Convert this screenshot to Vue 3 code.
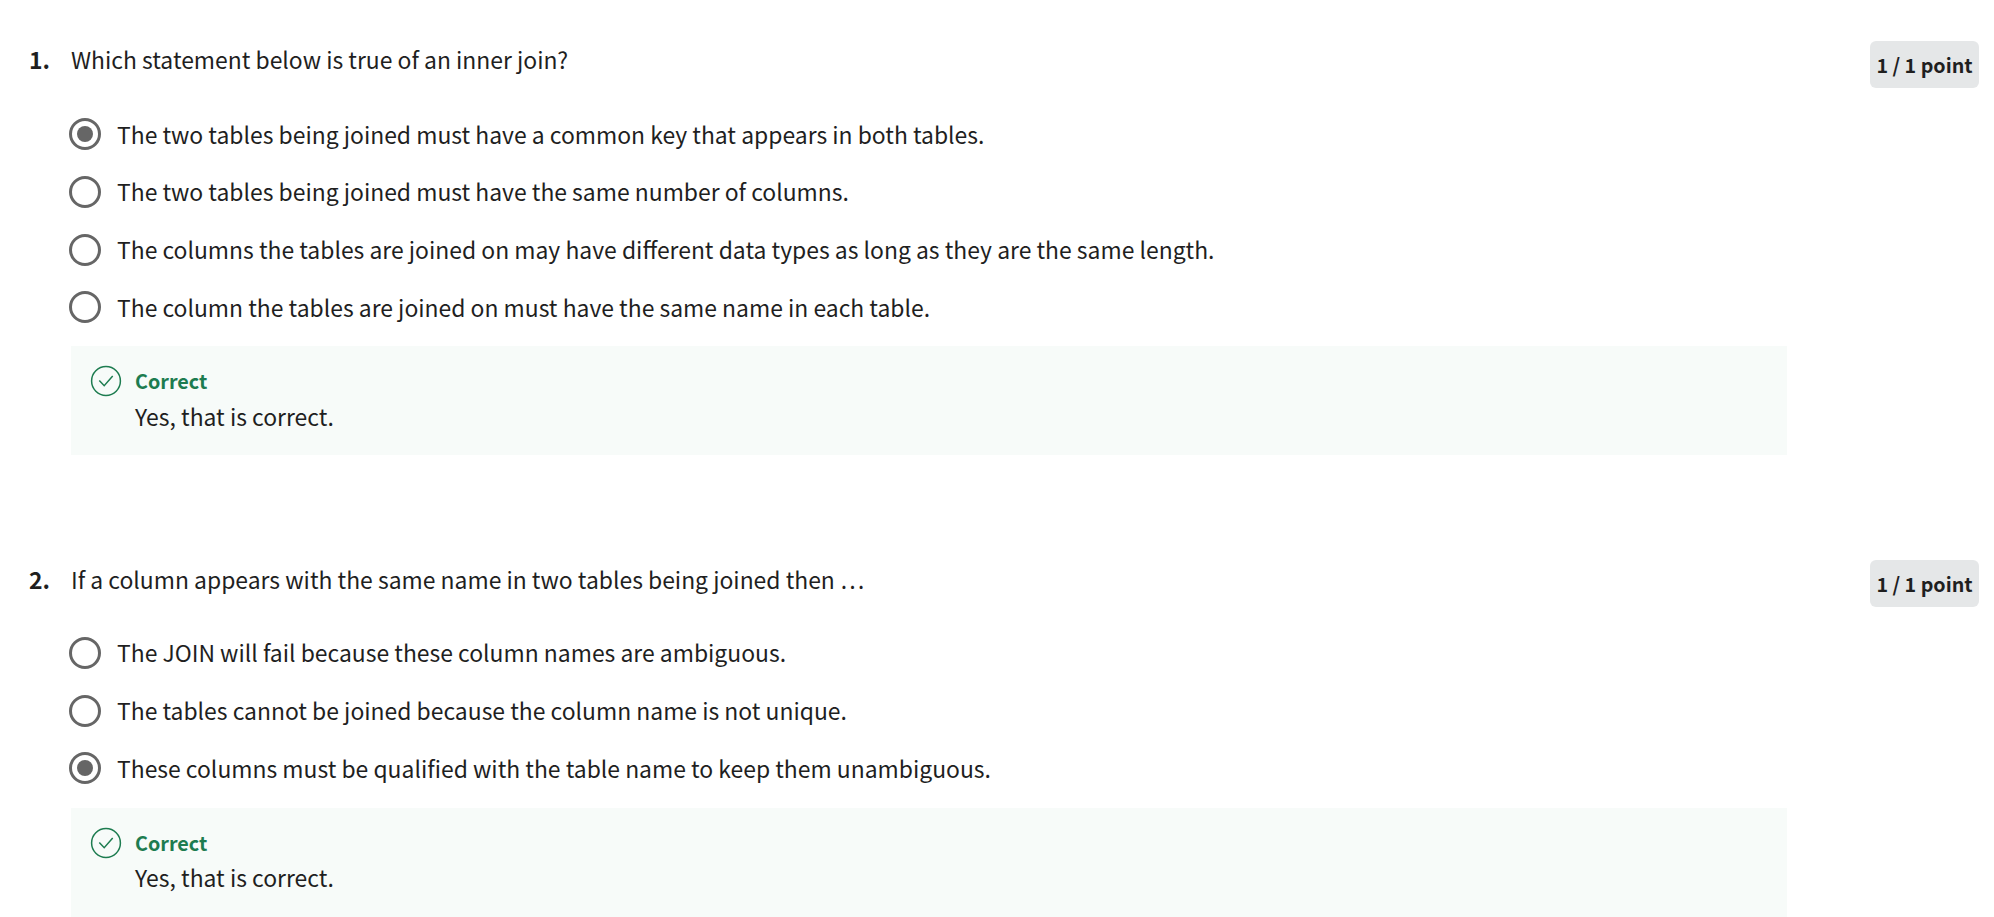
<script setup>
const questions = [
  {
    prompt: 'Which statement below is true of an inner join?',
    options: [
      'The two tables being joined must have a common key that appears in both tables.',
      'The two tables being joined must have the same number of columns.',
      'The columns the tables are joined on may have different data types as long as they are the same length.',
      'The column the tables are joined on must have the same name in each table.',
    ],
    chosen: 0,
  },
  {
    prompt: 'If a column appears with the same name in two tables being joined then …',
    options: [
      'The JOIN will fail because these column names are ambiguous.',
      'The tables cannot be joined because the column name is not unique.',
      'These columns must be qualified with the table name to keep them unambiguous.',
    ],
    chosen: 2,
  },
]
</script>

<template>
  <main class="quiz">
    <section v-for="(q, i) in questions" :key="i" class="question">
      <div class="number">{{ i + 1 }}.</div>
      <div class="body">
        <div class="prompt">{{ q.prompt }}</div>
        <div class="options">
          <div v-for="(o, j) in q.options" :key="j" class="option">
            <svg class="radio" width="32" height="32" viewBox="0 0 32 32">
              <circle cx="16" cy="16" r="14.5" fill="none" stroke="#666" stroke-width="3" />
              <circle v-if="j === q.chosen" cx="16" cy="16" r="8" fill="#666" />
            </svg>
            <span>{{ o }}</span>
          </div>
        </div>
        <div class="feedback">
          <svg class="check" width="32" height="32" viewBox="0 0 32 32" fill="none" stroke="#1d7c50" stroke-width="1.5">
            <circle cx="16" cy="16" r="14.4" />
            <path d="M9.300 15.500l4.900 5.200 8.500-9.600" />
          </svg>
          <div class="message">
            <div class="verdict">Correct</div>
            <div class="note">Yes, that is correct.</div>
          </div>
        </div>
      </div>
      <div class="points">1 / 1 point</div>
    </section>
  </main>
</template>

<style>
body { background: #fff; overflow: hidden; }
</style>

<style scoped>
.quiz {
  height: 917px;
  overflow: hidden;
  box-sizing: border-box;
  padding-top: 39px;
  color: #1f1f1f;
  font: 22.920px/40px "Noto Sans CJK SC", "Noto Sans", sans-serif;
}
.question {
  display: grid;
  grid-template-columns: 42px 1716px 1fr;
  align-items: start;
  padding: 0 15px 0 29px;
}
.question + .question { margin-top: 104px; }
.number { font-weight: 700; }
.options { padding-top: 26.400px; }
.option { display: flex; align-items: center; height: 57.670px; margin-left: -2px; }
.option span { margin: 0 0 1px 16px; white-space: nowrap; }
.radio, .check { flex: none; display: block; }
.radio { margin-top: 0.500px; }
.feedback { display: flex; height: 109px; margin-top: 9.900px; padding: 19px; box-sizing: border-box; background: #f7fbf9; }
.message { margin-left: 13px; }
.verdict { color: #1d7c50; font-weight: 700; font-size: 19.750px; line-height: 31px; }
.note { line-height: 41px; }
.points {
  justify-self: end;
  margin-top: 2px;
  width: 109px;
  height: 47px;
  border-radius: 6px;
  background: #e5e7e8;
  text-align: center;
  font-weight: 700;
  font-size: 19.700px;
  line-height: 47px;
}
.question + .question .options { padding-top: 25px; }
.question + .question .feedback { margin-top: 11px; }
.question + .question .note { line-height: 39px; }
.question + .question .points { margin-top: 1px; }
</style>
